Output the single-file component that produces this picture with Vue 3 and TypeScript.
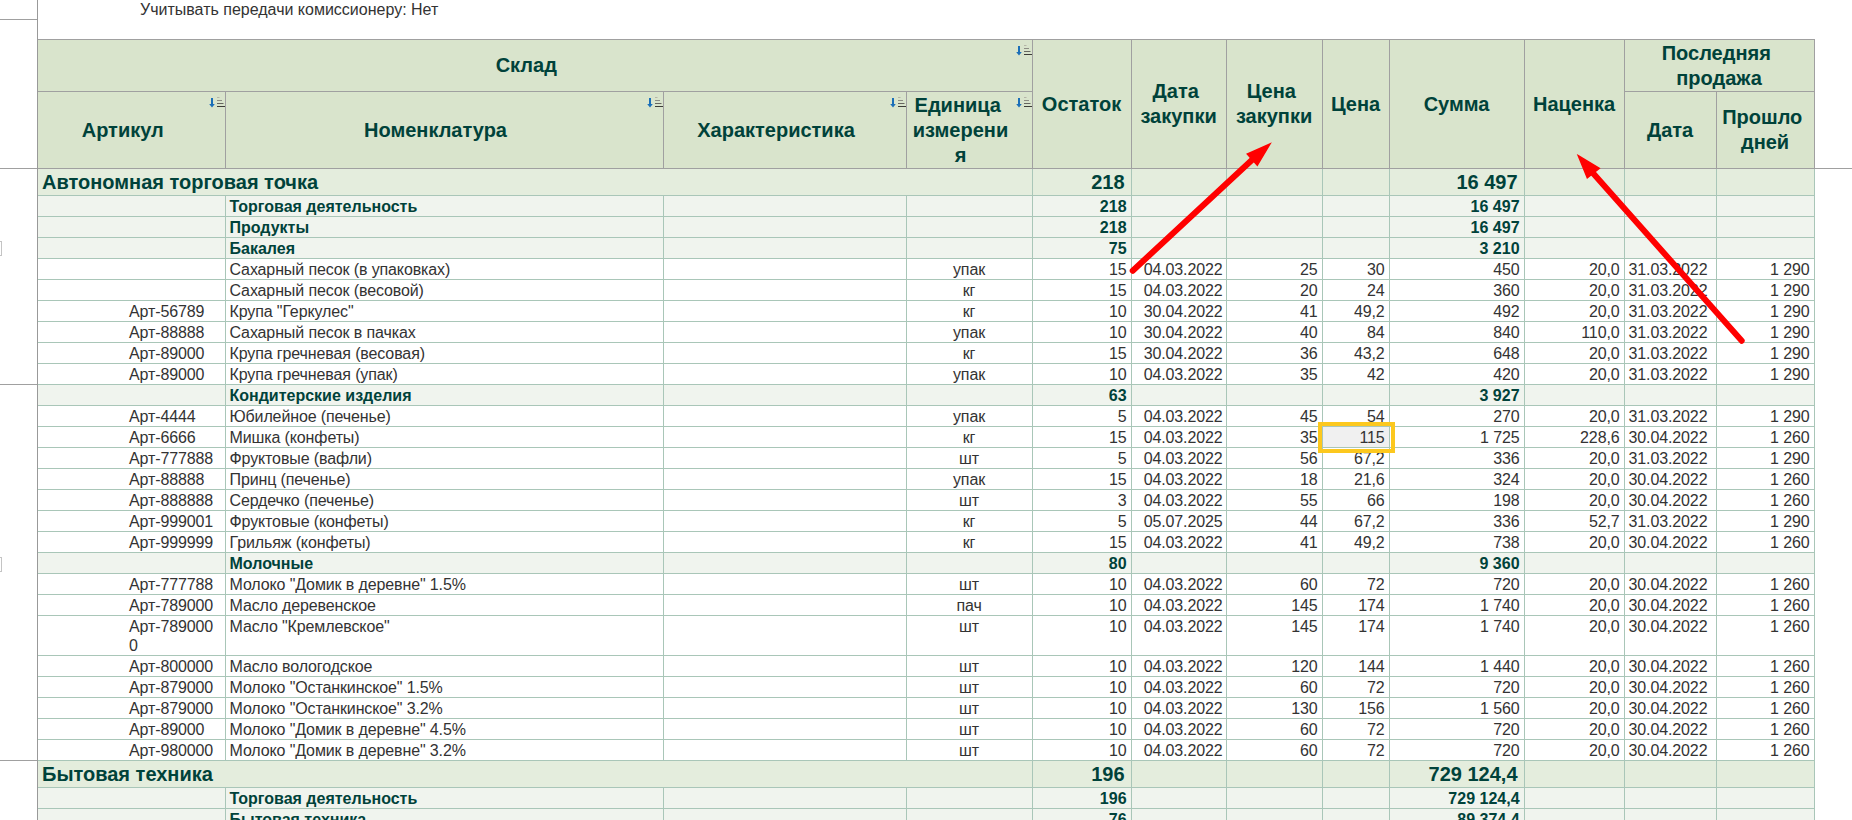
<script setup lang="ts">
type Row = {
  kind: "group" | "sub" | "item";
  art?: string;
  name: string;
  unit?: string;
  rest: string;
  date?: string;
  buy?: string;
  price?: string;
  sum: string;
  markup?: string;
  sold?: string;
  days?: string;
  mark?: boolean;
};

const item = (
  art: string,
  name: string,
  unit: string,
  rest: string,
  date: string,
  buy: string,
  price: string,
  sum: string,
  markup: string,
  sold: string,
  days: string,
  mark = false
): Row => ({ kind: "item", art, name, unit, rest, date, buy, price, sum, markup, sold, days, mark });

const group = (name: string, rest: string, sum: string): Row => ({ kind: "group", name, rest, sum });
const sub = (name: string, rest: string, sum: string): Row => ({ kind: "sub", name, rest, sum });

const rows: Row[] = [
  group("Автономная торговая точка", "218", "16 497"),
  sub("Торговая деятельность", "218", "16 497"),
  sub("Продукты", "218", "16 497"),
  sub("Бакалея", "75", "3 210"),
  item("", "Сахарный песок (в упаковках)", "упак", "15", "04.03.2022", "25", "30", "450", "20,0", "31.03.2022", "1 290"),
  item("", "Сахарный песок (весовой)", "кг", "15", "04.03.2022", "20", "24", "360", "20,0", "31.03.2022", "1 290"),
  item("Арт-56789", 'Крупа "Геркулес"', "кг", "10", "30.04.2022", "41", "49,2", "492", "20,0", "31.03.2022", "1 290"),
  item("Арт-88888", "Сахарный песок в пачках", "упак", "10", "30.04.2022", "40", "84", "840", "110,0", "31.03.2022", "1 290"),
  item("Арт-89000", "Крупа гречневая (весовая)", "кг", "15", "30.04.2022", "36", "43,2", "648", "20,0", "31.03.2022", "1 290"),
  item("Арт-89000", "Крупа гречневая (упак)", "упак", "10", "04.03.2022", "35", "42", "420", "20,0", "31.03.2022", "1 290"),
  sub("Кондитерские изделия", "63", "3 927"),
  item("Арт-4444", "Юбилейное (печенье)", "упак", "5", "04.03.2022", "45", "54", "270", "20,0", "31.03.2022", "1 290"),
  item("Арт-6666", "Мишка (конфеты)", "кг", "15", "04.03.2022", "35", "115", "1 725", "228,6", "30.04.2022", "1 260", true),
  item("Арт-777888", "Фруктовые (вафли)", "шт", "5", "04.03.2022", "56", "67,2", "336", "20,0", "31.03.2022", "1 290"),
  item("Арт-88888", "Принц (печенье)", "упак", "15", "04.03.2022", "18", "21,6", "324", "20,0", "30.04.2022", "1 260"),
  item("Арт-888888", "Сердечко (печенье)", "шт", "3", "04.03.2022", "55", "66", "198", "20,0", "30.04.2022", "1 260"),
  item("Арт-999001", "Фруктовые (конфеты)", "кг", "5", "05.07.2025", "44", "67,2", "336", "52,7", "31.03.2022", "1 290"),
  item("Арт-999999", "Грильяж (конфеты)", "кг", "15", "04.03.2022", "41", "49,2", "738", "20,0", "30.04.2022", "1 260"),
  sub("Молочные", "80", "9 360"),
  item("Арт-777788", 'Молоко "Домик в деревне" 1.5%', "шт", "10", "04.03.2022", "60", "72", "720", "20,0", "30.04.2022", "1 260"),
  item("Арт-789000", "Масло деревенское", "пач", "10", "04.03.2022", "145", "174", "1 740", "20,0", "30.04.2022", "1 260"),
  item("Арт-7890000", 'Масло "Кремлевское"', "шт", "10", "04.03.2022", "145", "174", "1 740", "20,0", "30.04.2022", "1 260"),
  item("Арт-800000", "Масло вологодское", "шт", "10", "04.03.2022", "120", "144", "1 440", "20,0", "30.04.2022", "1 260"),
  item("Арт-879000", 'Молоко "Останкинское" 1.5%', "шт", "10", "04.03.2022", "60", "72", "720", "20,0", "30.04.2022", "1 260"),
  item("Арт-879000", 'Молоко "Останкинское" 3.2%', "шт", "10", "04.03.2022", "130", "156", "1 560", "20,0", "30.04.2022", "1 260"),
  item("Арт-89000", 'Молоко "Домик в деревне" 4.5%', "шт", "10", "04.03.2022", "60", "72", "720", "20,0", "30.04.2022", "1 260"),
  item("Арт-980000", 'Молоко "Домик в деревне" 3.2%', "шт", "10", "04.03.2022", "60", "72", "720", "20,0", "30.04.2022", "1 260"),
  group("Бытовая техника", "196", "729 124,4"),
  sub("Торговая деятельность", "196", "729 124,4"),
  sub("Бытовая техника", "76", "89 374,4"),
];

const colWidths = [187, 438, 243, 126, 99, 95, 96, 67, 135, 100, 92, 98];

// spreadsheet row marks in the left gutter
const gutter = [
  { h: 20, line: true },
  { h: 149, line: true },
  { h: 72 },
  { h: 15, mark: true },
  { h: 129, line: true },
  { h: 172 },
  { h: 15, mark: true },
  { h: 189, line: true },
];

// the source report keeps a no-break space after the first word of two-line titles
const sortTitles = ["Артикул", "Номенклатура", "Характеристика", "Единица\u00a0 измерения"];
</script>

<template>
  <div class="page">
    <div class="gutter">
      <div
        v-for="(seg, i) in gutter"
        :key="i"
        :class="{ 'gutter-line': seg.line, 'gutter-mark': seg.mark }"
        :style="{ height: seg.h + 'px' }"
      ></div>
    </div>

    <div class="sheet">
      <div class="filter">Учитывать передачи комиссионеру: Нет</div>

      <table class="report">
        <colgroup>
          <col v-for="(w, i) in colWidths" :key="i" :style="{ width: w + 'px' }" />
        </colgroup>
        <thead>
          <tr class="head-top">
            <th colspan="4" class="sortable">
              Склад
              <svg class="sort" width="16" height="11" viewBox="0 0 16 11">
                <path d="M2 1h2v6h1.8L3 10.6 0.2 7H2z" fill="#1b6fb8" />
                <path d="M8 0.5h2.5" stroke="#b5b5a8" />
                <path d="M8 3.5h5" stroke="#8d8d84" />
                <path d="M8 6.5h6.5" stroke="#66665f" />
                <path d="M8 9.5h8" stroke="#3d3d38" />
              </svg>
            </th>
            <th rowspan="2">Остаток</th>
            <th rowspan="2">Дата&nbsp; закупки</th>
            <th rowspan="2">Цена&nbsp; закупки</th>
            <th rowspan="2">Цена</th>
            <th rowspan="2">Сумма</th>
            <th rowspan="2">Наценка</th>
            <th colspan="2">Последняя&nbsp; продажа</th>
          </tr>
          <tr class="head-bottom">
            <th v-for="title in sortTitles" :key="title" class="sortable">
              {{ title }}
              <svg class="sort" width="16" height="11" viewBox="0 0 16 11">
                <path d="M2 1h2v6h1.8L3 10.6 0.2 7H2z" fill="#1b6fb8" />
                <path d="M8 0.5h2.5" stroke="#b5b5a8" />
                <path d="M8 3.5h5" stroke="#8d8d84" />
                <path d="M8 6.5h6.5" stroke="#66665f" />
                <path d="M8 9.5h8" stroke="#3d3d38" />
              </svg>
            </th>
            <th>Дата</th>
            <th>Прошло&nbsp; дней</th>
          </tr>
        </thead>
        <tbody>
          <template v-for="(row, i) in rows" :key="i">
            <tr v-if="row.kind === 'group'" class="group">
              <td colspan="4" class="name">{{ row.name }}</td>
              <td class="num">{{ row.rest }}</td>
              <td></td>
              <td></td>
              <td></td>
              <td class="num">{{ row.sum }}</td>
              <td></td>
              <td></td>
              <td></td>
            </tr>
            <tr v-else-if="row.kind === 'sub'" class="sub">
              <td></td>
              <td class="name">{{ row.name }}</td>
              <td></td>
              <td></td>
              <td class="num">{{ row.rest }}</td>
              <td></td>
              <td></td>
              <td></td>
              <td class="num">{{ row.sum }}</td>
              <td></td>
              <td></td>
              <td></td>
            </tr>
            <tr v-else class="item">
              <td class="art">{{ row.art }}</td>
              <td class="name">{{ row.name }}</td>
              <td></td>
              <td class="unit">{{ row.unit }}</td>
              <td class="num">{{ row.rest }}</td>
              <td class="num date">{{ row.date }}</td>
              <td class="num">{{ row.buy }}</td>
              <td class="num" :class="{ marked: row.mark }">
                {{ row.price }}
                <span v-if="row.mark" class="mark-box"></span>
              </td>
              <td class="num">{{ row.sum }}</td>
              <td class="num">{{ row.markup }}</td>
              <td class="sold">{{ row.sold }}</td>
              <td class="num">{{ row.days }}</td>
            </tr>
          </template>
        </tbody>
      </table>
    </div>

    <div class="gutter-right">
      <div class="gutter-line"></div>
    </div>

    <!-- red hand drawn arrows on top of the report -->
    <svg class="arrows" width="1852" height="820" viewBox="0 0 1852 820">
      <g fill="#ff0000" stroke="#ff0000">
        <path d="M1132.7 270.7L1253 159" stroke-width="6" stroke-linecap="round" />
        <path d="M1270 144L1247.3 154L1257.3 165.3Z" stroke-width="1.5" />
        <path d="M1741.7 340.7L1592 172" stroke-width="6" stroke-linecap="round" />
        <path d="M1578.3 155.7L1599.3 168.3L1587.3 177.7Z" stroke-width="1.5" />
      </g>
    </svg>
  </div>
</template>

<style>
html,
body {
  margin: 0;
  overflow: hidden;
  background: #fff;
}
</style>

<style scoped>
.page {
  position: relative;
  display: flex;
  width: 1852px;
  height: 820px;
  overflow: hidden;
  font-family: "Liberation Sans", Arial, sans-serif;
  font-size: 16px;
  color: #333;
}

.gutter {
  width: 37px;
  flex: none;
}
.gutter-line {
  box-sizing: border-box;
  border-bottom: 1px solid #a0a0a0;
}
.gutter-mark {
  box-sizing: border-box;
  width: 2px;
  border: 1px solid #c4c4c4;
  border-left: none;
}

.sheet {
  flex: none;
  border-left: 1px solid #999;
}
.filter {
  height: 39px;
  box-sizing: border-box;
  padding-left: 102px;
  line-height: 19px;
}

.report {
  table-layout: fixed;
  width: 1776px;
  border-collapse: collapse;
}

th {
  position: relative;
  padding: 0 3px;
  background: #d9e4cc;
  border: 1px solid #a0a0a0;
  color: #00423a;
  font-size: 20px;
  line-height: 25px;
  font-weight: bold;
  text-align: center;
  vertical-align: middle;
  overflow-wrap: anywhere;
}
th:first-child {
  border-left: none;
}
.head-top th {
  height: 51px;
}
.head-bottom th {
  height: 76px;
}
th.sortable {
  padding-right: 20px;
}
.sort {
  position: absolute;
  top: 5px;
  right: 0;
}

td {
  padding: 1px 4px 0;
  border: 1px solid #a9c6b8;
  line-height: 19px;
  vertical-align: top;
}
td:first-child {
  border-left: none;
}

.group td {
  background: #e4eddd;
  color: #00423a;
  font-size: 20px;
  line-height: 25px;
  font-weight: bold;
  vertical-align: middle;
}
.group .num {
  padding-right: 6px;
}
.sub td {
  background: #f0f4ee;
  color: #00423a;
  font-weight: bold;
}
.item td {
  letter-spacing: -0.12px;
}

.num {
  text-align: right;
}
.date {
  padding-right: 3px;
}
.unit {
  text-align: center;
}
.art {
  padding: 1px 6px 0 91px;
  word-break: break-all;
}
.sold {
  padding-left: 4px;
}

.marked {
  position: relative;
  background: #f0f0f0;
}
.mark-box {
  position: absolute;
  top: -5px;
  right: -6px;
  bottom: -6px;
  left: -5px;
  border: 4px solid #fcc81e;
}

.gutter-right {
  flex: 1;
}
.gutter-right .gutter-line {
  height: 169px;
}

.arrows {
  position: absolute;
  top: 0;
  left: 0;
  pointer-events: none;
}
</style>
